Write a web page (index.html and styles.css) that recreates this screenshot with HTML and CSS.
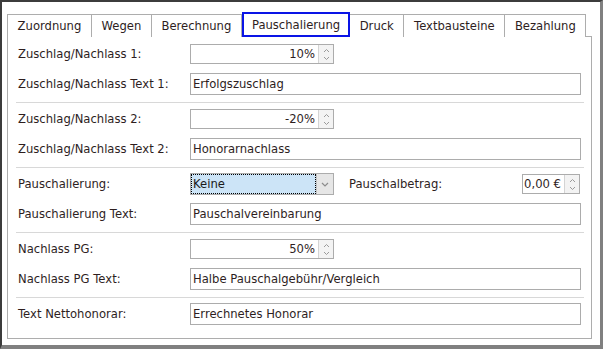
FILE: index.html
```html
<!DOCTYPE html>
<html lang="de">
<head>
<meta charset="utf-8">
<title>Pauschalierung</title>
<link rel="stylesheet" href="styles.css">
</head>
<body>
<div class="frame">
  <div class="tabs">
    <div class="tab">Zuordnung</div>
    <div class="tab">Wegen</div>
    <div class="tab">Berechnung</div>
    <div class="tab active">Pauschalierung</div>
    <div class="tab">Druck</div>
    <div class="tab">Textbausteine</div>
    <div class="tab">Bezahlung</div>
  </div>
  <div class="panel">
    <div class="group">
      <div class="row">
        <span class="label">Zuschlag/Nachlass 1:</span>
        <div class="spin">
          <span class="val">10%</span>
          <span class="btns">
            <svg width="7" height="5" viewBox="0 0 7 5"><polyline points="1,4 3.5,1.5 6,4" fill="none" stroke="#9a9a9a" stroke-width="1"/></svg>
            <svg width="7" height="5" viewBox="0 0 7 5"><polyline points="1,1 3.5,3.5 6,1" fill="none" stroke="#9a9a9a" stroke-width="1"/></svg>
          </span>
        </div>
      </div>
      <div class="row">
        <span class="label">Zuschlag/Nachlass Text 1:</span>
        <div class="text">Erfolgszuschlag</div>
      </div>
    </div>
    <div class="sep"></div>
    <div class="group">
      <div class="row">
        <span class="label">Zuschlag/Nachlass 2:</span>
        <div class="spin">
          <span class="val">-20%</span>
          <span class="btns">
            <svg width="7" height="5" viewBox="0 0 7 5"><polyline points="1,4 3.5,1.5 6,4" fill="none" stroke="#9a9a9a" stroke-width="1"/></svg>
            <svg width="7" height="5" viewBox="0 0 7 5"><polyline points="1,1 3.5,3.5 6,1" fill="none" stroke="#9a9a9a" stroke-width="1"/></svg>
          </span>
        </div>
      </div>
      <div class="row">
        <span class="label">Zuschlag/Nachlass Text 2:</span>
        <div class="text">Honorarnachlass</div>
      </div>
    </div>
    <div class="sep"></div>
    <div class="group">
      <div class="row">
        <span class="label">Pauschalierung:</span>
        <div class="select">
          <span class="sel-val">Keine</span>
          <span class="sel-btn">
            <svg width="8" height="5" viewBox="0 0 8 5"><polyline points="1,1 4,4 7,1" fill="none" stroke="#8c8c8c" stroke-width="1.2"/></svg>
          </span>
        </div>
        <span class="label2">Pauschalbetrag:</span>
        <div class="spin small">
          <span class="val">0,00 €</span>
          <span class="btns">
            <svg width="7" height="5" viewBox="0 0 7 5"><polyline points="1,4 3.5,1.5 6,4" fill="none" stroke="#9a9a9a" stroke-width="1"/></svg>
            <svg width="7" height="5" viewBox="0 0 7 5"><polyline points="1,1 3.5,3.5 6,1" fill="none" stroke="#9a9a9a" stroke-width="1"/></svg>
          </span>
        </div>
      </div>
      <div class="row">
        <span class="label">Pauschalierung Text:</span>
        <div class="text">Pauschalvereinbarung</div>
      </div>
    </div>
    <div class="sep"></div>
    <div class="group">
      <div class="row">
        <span class="label">Nachlass PG:</span>
        <div class="spin">
          <span class="val">50%</span>
          <span class="btns">
            <svg width="7" height="5" viewBox="0 0 7 5"><polyline points="1,4 3.5,1.5 6,4" fill="none" stroke="#9a9a9a" stroke-width="1"/></svg>
            <svg width="7" height="5" viewBox="0 0 7 5"><polyline points="1,1 3.5,3.5 6,1" fill="none" stroke="#9a9a9a" stroke-width="1"/></svg>
          </span>
        </div>
      </div>
      <div class="row">
        <span class="label">Nachlass PG Text:</span>
        <div class="text">Halbe Pauschalgebühr/Vergleich</div>
      </div>
    </div>
    <div class="sep"></div>
    <div class="group">
      <div class="row">
        <span class="label">Text Nettohonorar:</span>
        <div class="text">Errechnetes Honorar</div>
      </div>
    </div>
  </div>
</div>
</body>
</html>
```
FILE: styles.css
```css
* {
  box-sizing: border-box;
}

body {
  margin: 0;
  background: #ffffff;
  font-family: "DejaVu Sans", sans-serif;
  font-size: 11.6px;
  color: #2e1e1e;
}

.frame {
  width: 603px;
  height: 349px;
  border-style: solid;
  border-width: 2px 3px 4px 2px;
  border-color: #3c3c3c #808080 #808080 #3c3c3c;
  padding: 10px 0 0 5px;
  background: #ffffff;
}

.tabs {
  display: flex;
  align-items: flex-end;
  height: 25px;
  position: relative;
  z-index: 1;
}

.tab {
  height: 23px;
  border: 1px solid #adadad;
  border-bottom: none;
  padding: 0 9.6px;
  margin-right: -1px;
  display: flex;
  align-items: center;
  background: #ffffff;
  white-space: nowrap;
}

.tab.active {
  height: 25px;
  border: 2px solid #0a14e6;
  padding: 0 8px;
  margin-left: 1px;
  position: relative;
  z-index: 2;
}

.panel {
  width: 585px;
  height: 303px;
  border: 1px solid #adadad;
  padding-top: 6px;
  margin-top: -1px;
}

.group {
  display: flex;
  flex-direction: column;
  gap: 8px;
}

.row {
  display: flex;
  align-items: center;
  height: 22px;
  padding: 0 10px;
}

.label {
  width: 172px;
  flex: none;
  white-space: nowrap;
}

.label2 {
  flex: 1;
  margin-left: 15px;
  white-space: nowrap;
}

.sep {
  height: 1px;
  background: #d8d8d8;
  margin: 7px 7px 5px 8px;
}

.spin {
  width: 144px;
  height: 20px;
  border: 1px solid #acacac;
  display: flex;
}

.spin.small {
  width: 58px;
  margin-right: 1px;
}

.val {
  flex: 1;
  text-align: right;
  padding-right: 3px;
  line-height: 18px;
  white-space: nowrap;
}

.btns {
  width: 15px;
  flex: none;
  border-left: 1px solid #d4d4d4;
  background: #f3f3f3;
  display: flex;
  flex-direction: column;
  align-items: center;
  justify-content: space-around;
  padding: 1px 0;
}

.btns svg {
  display: block;
}

.select {
  width: 144px;
  height: 22px;
  border: 1px solid #acacac;
  display: flex;
  flex: none;
}

.sel-val {
  flex: 1;
  background: #cce4f7;
  outline: 1px dotted #000000;
  outline-offset: -1px;
  padding-left: 2px;
  line-height: 20px;
  color: #1a1a1a;
}

.sel-btn {
  width: 17px;
  flex: none;
  background: #e6e6e6;
  border-left: 1px solid #c4c4c4;
  display: flex;
  align-items: center;
  justify-content: center;
}

.text {
  flex: 1;
  height: 22px;
  border: 1px solid #acacac;
  padding-left: 2px;
  line-height: 20px;
  white-space: nowrap;
}
```
